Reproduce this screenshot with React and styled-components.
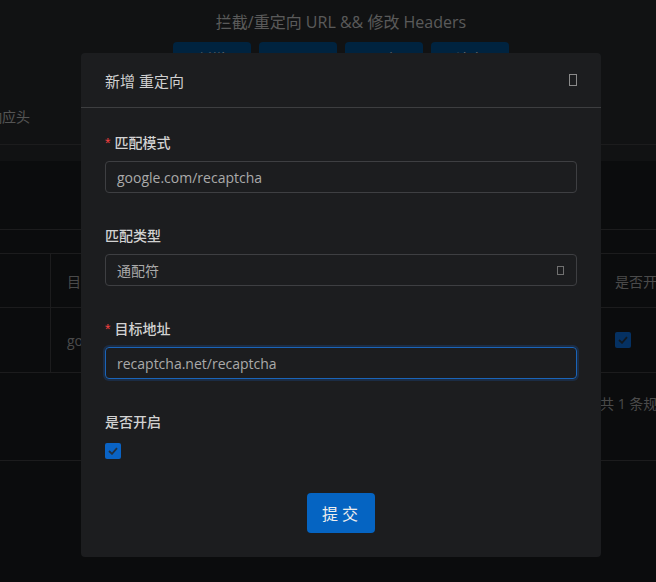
import styled, { createGlobalStyle } from 'styled-components';

const GlobalStyle = createGlobalStyle`
  html, body {
    margin: 0;
    padding: 0;
    background: #16181a;
    overflow: hidden;
  }
  body {
    font-family: 'Segoe UI', 'Open Sans', 'Noto Sans CJK SC', sans-serif;
    font-size: 14px;
  }
  * {
    box-sizing: border-box;
  }
`;

const Page = styled.div`
  width: 682px;
  height: 582px;
  background: #16181a;
  color: #949494;
`;

const TopArea = styled.div`
  background: #222426;
  padding-top: 11px;
  padding-bottom: 16px;
`;

const Title = styled.h1`
  margin: 0;
  text-align: center;
  font-size: 16px;
  font-weight: 400;
  line-height: 22px;
  color: #b4b4b4;
`;

const ButtonRow = styled.div`
  display: flex;
  justify-content: center;
  gap: 8px;
  margin-top: 9px;
`;

const TopButton = styled.button`
  width: 78px;
  height: 32px;
  border: none;
  border-radius: 4px;
  background: #00467e;
  color: #e0e0e0;
  font: inherit;
  font-size: 14px;
`;

const TabBar = styled.div`
  display: flex;
  gap: 32px;
  margin-top: 16px;
  margin-left: -86px;
  border-bottom: 1px solid #38393b;
`;

const Tab = styled.div`
  height: 54px;
  line-height: 54px;
  font-size: 14px;
  color: ${(p) => (p.$active ? '#a8a8a8' : '#989898')};
`;

const Card = styled.div`
  background: #16181a;
  padding-top: 68px;
`;

const Band = styled.div`
  height: 24px;
  border-top: 1px solid #38393b;
`;

const Row = styled.div`
  display: grid;
  grid-template-columns: 51px 1fr 83px;
  height: ${(p) => p.$h}px;
  border-top: 1px solid #38393b;
  color: #949494;
`;

const Cell = styled.div`
  display: flex;
  align-items: center;
  padding-left: 16px;
  border-right: ${(p) => (p.$divider ? '1px solid #38393b' : 'none')};
  white-space: nowrap;
  overflow: hidden;
`;

const Pager = styled.div`
  height: 89px;
  border-top: 1px solid #38393b;
  border-bottom: 1px solid #38393b;
  display: flex;
  justify-content: flex-end;
  padding-top: 20px;
  white-space: nowrap;
  overflow: hidden;
  & span {
    width: 82px;
    overflow: hidden;
  }
`;

const Mask = styled.div`
  position: fixed;
  inset: 0;
  width: 682px;
  background: rgba(0, 0, 0, 0.5);
`;

const ModalWrap = styled.div`
  position: fixed;
  top: 0;
  left: 0;
  width: 682px;
  display: flex;
  justify-content: center;
  padding-top: 53px;
`;

const Modal = styled.div`
  width: 520px;
  background: #1c1d1f;
  border-radius: 4px;
  color: #d6d6d6;
`;

const ModalHeader = styled.div`
  height: 55px;
  display: flex;
  align-items: center;
  justify-content: space-between;
  padding: 0 24px;
  border-bottom: 1px solid #3d3e40;
  font-size: 15px;
  color: #d0d0d0;
`;

const Tofu = styled.span`
  display: inline-block;
  width: ${(p) => p.$w}px;
  height: ${(p) => p.$h}px;
  border: 1.5px solid ${(p) => p.$c};
`;

const ModalBody = styled.form`
  padding: 24px;
  display: flex;
  flex-direction: column;
`;

const FormItem = styled.div`
  margin-bottom: ${(p) => p.$mb ?? 32}px;
`;

const Label = styled.label`
  display: block;
  line-height: 22px;
  font-size: 14px;
  font-weight: 500;
  color: #d2d2d2;
  margin-bottom: ${(p) => p.$mb ?? 7}px;
`;

const Required = styled.span`
  color: #f53f3f;
  margin-right: 4px;
  font-family: 'Liberation Sans', sans-serif;
`;

const Field = styled.div`
  height: 32px;
  display: flex;
  align-items: center;
  justify-content: space-between;
  padding: 0 12px 0 11px;
  border-radius: 4px;
  border: 1px solid ${(p) => (p.$focus ? '#1a64b8' : '#3e3f42')};
  box-shadow: ${(p) => (p.$focus ? '0 0 0 2px rgba(22, 93, 180, 0.25)' : 'none')};
  color: #aaaaaa;
  font-size: 14px;
`;

const Check = styled.span`
  display: flex;
  align-items: center;
  justify-content: center;
  width: 16px;
  height: 16px;
  border-radius: 2px;
  background: #0a63c4;
`;

const Footer = styled.div`
  display: flex;
  justify-content: center;
`;

const Submit = styled.button`
  width: 68px;
  height: 40px;
  border: none;
  border-radius: 4px;
  background: #0564c2;
  color: #eeeeee;
  font: inherit;
  font-size: 16px;
  letter-spacing: 4px;
  padding-left: 8px;
`;

const CheckMark = () => (
  <svg width="10" height="8" viewBox="0 0 10 8">
    <polyline points="1,4 4,6.8 9,1.2" fill="none" stroke="#22303f" strokeWidth="1.8" />
  </svg>
);

export default function App() {
  return (
    <>
      <GlobalStyle />
      <Page>
        <TopArea>
          <Title>拦截/重定向 URL &amp;&amp; 修改 Headers</Title>
          <ButtonRow>
            <TopButton>新增</TopButton>
            <TopButton>导入</TopButton>
            <TopButton>导出</TopButton>
            <TopButton>清空</TopButton>
          </ButtonRow>
          <TabBar>
            <Tab>请求头</Tab>
            <Tab $active>响应头</Tab>
          </TabBar>
        </TopArea>
        <Card>
          <Band />
          <Row $h={54}>
            <Cell $divider />
            <Cell>目标地址</Cell>
            <Cell>是否开启</Cell>
          </Row>
          <Row $h={65}>
            <Cell $divider />
            <Cell>google.com/recaptcha</Cell>
            <Cell>
              <Check>
                <CheckMark />
              </Check>
            </Cell>
          </Row>
          <Pager>
            <span>共 1 条规则</span>
          </Pager>
        </Card>
      </Page>
      <Mask />
      <ModalWrap>
        <Modal>
          <ModalHeader>
            <span>新增 重定向</span>
            <Tofu $w={8} $h={12} $c="#8a8a8a" />
          </ModalHeader>
          <ModalBody>
            <FormItem>
              <Label>
                <Required>*</Required>匹配模式
              </Label>
              <Field>google.com/recaptcha</Field>
            </FormItem>
            <FormItem>
              <Label>匹配类型</Label>
              <Field>
                <span>通配符</span>
                <Tofu $w={7} $h={9} $c="#707070" />
              </Field>
            </FormItem>
            <FormItem>
              <Label>
                <Required>*</Required>目标地址
              </Label>
              <Field $focus>recaptcha.net/recaptcha</Field>
            </FormItem>
            <FormItem $mb={34}>
              <Label $mb={10}>是否开启</Label>
              <Check>
                <CheckMark />
              </Check>
            </FormItem>
            <Footer>
              <Submit type="button">提交</Submit>
            </Footer>
          </ModalBody>
        </Modal>
      </ModalWrap>
    </>
  );
}
